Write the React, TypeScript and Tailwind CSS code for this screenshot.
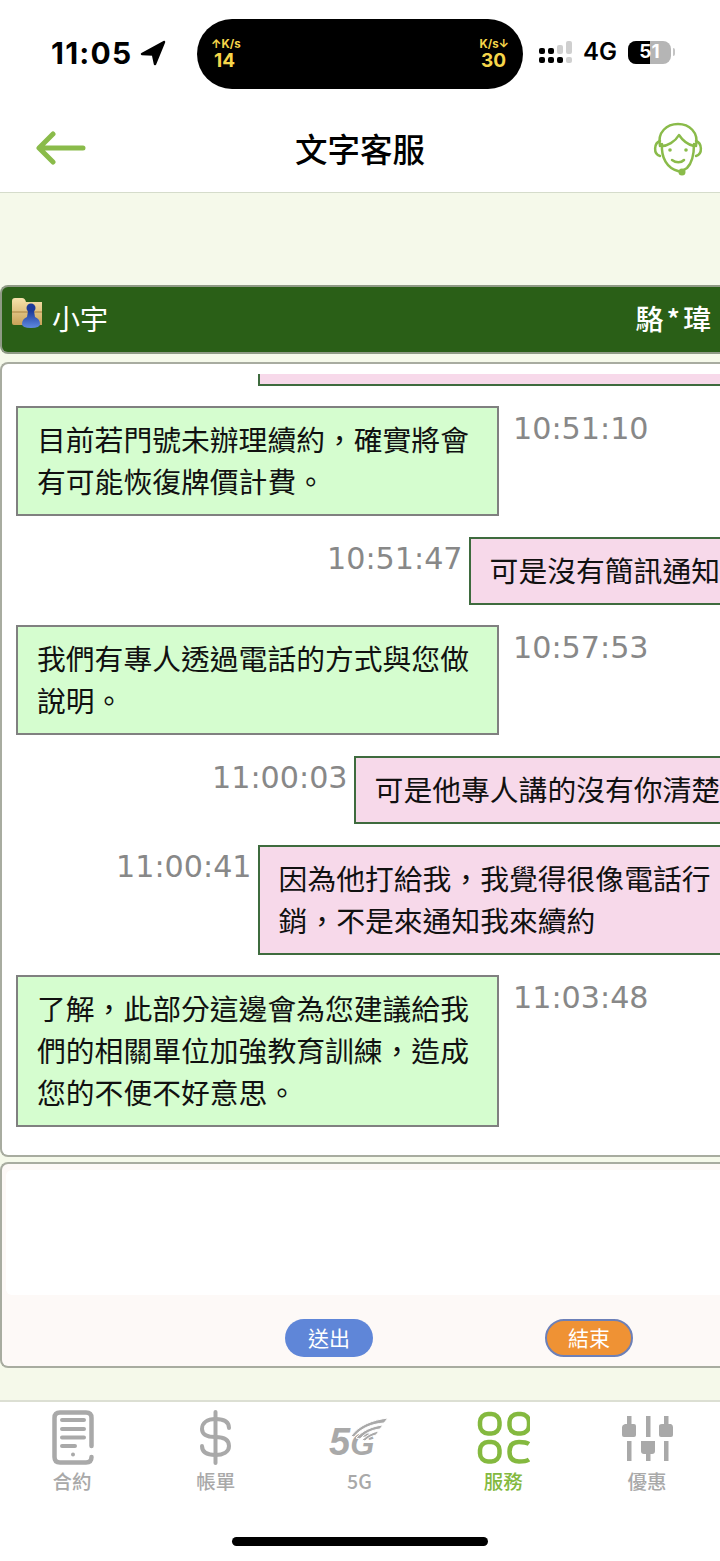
const cjk = "font-['Noto_Sans_CJK_TC',sans-serif]"

function StatusBar() {
  return (
    <div className="h-[108px] relative flex items-center">
      <div className="flex items-center ml-[51px] w-[146px] -mt-[2px]">
        <span className="font-['Inter',sans-serif] font-bold text-[30px] tracking-[1.2px] text-black">11:05</span>
        <svg className="ml-[8px]" width="26" height="26" viewBox="0 0 26 26"><path d="M24 2 L2 14 L13 14.5 L15 24 Z" fill="#000" stroke="#000" strokeLinejoin="round" strokeWidth="2.5" /></svg>
      </div>
      <div className="w-[326px] h-[70px] rounded-[35px] bg-black flex justify-between px-[14px] pt-[19px] text-[#f6d64a] font-['Inter',sans-serif] font-bold">
        <div className="flex flex-col">
          <span className="text-[11.5px] leading-[12px]">↑K/s</span>
          <span className="text-[19px] leading-[22px] ml-[3px]">14</span>
        </div>
        <div className="flex flex-col items-end">
          <span className="text-[11.5px] leading-[12px]">K/s↓</span>
          <span className="text-[19px] leading-[22px] mr-[3px]">30</span>
        </div>
      </div>
      <div className="flex items-center ml-[15px] -mt-[4px]">
        <svg width="35" height="24" viewBox="0 0 35 24">
          <rect x="1" y="8" width="6" height="6" rx="2" fill="#000" />
          <rect x="10" y="8" width="6" height="6" rx="2" fill="#000" />
          <rect x="1" y="17" width="6" height="6" rx="2" fill="#000" />
          <rect x="10" y="17" width="6" height="6" rx="2" fill="#000" />
          <rect x="19" y="17" width="6" height="6" rx="2" fill="#000" />
          <rect x="19" y="5" width="6" height="9" rx="2" fill="#cfcfcf" />
          <rect x="28" y="1" width="6" height="13" rx="2" fill="#cfcfcf" />
          <rect x="28" y="17" width="6" height="6" rx="2" fill="#cfcfcf" />
        </svg>
        <span className="ml-[10px] font-['Inter',sans-serif] font-semibold text-[24px] text-black">4G</span>
        <div className="ml-[11px] w-[43px] h-[23px] rounded-[8px] overflow-hidden flex relative bg-[#b5b5b5]">
          <div className="w-[22px] bg-black" />
          <span className="absolute inset-0 flex items-center justify-center font-['Inter',sans-serif] font-bold text-[19px] text-white">51</span>
        </div>
        <div className="w-[2px] h-[8px] bg-[#c4c4c4] rounded-r ml-[2px]" />
      </div>
    </div>
  )
}

function Header() {
  return (
    <header className="h-[85px] flex items-center bg-white border-b border-[#d5dccb] pb-[4px]">
      <div className="w-[200px]">
        <svg className="ml-[36px]" width="50" height="34" viewBox="0 0 50 34" fill="none" stroke="#8abb4a" strokeWidth="5" strokeLinecap="round" strokeLinejoin="round">
          <path d="M47 17 H4 M17 3 L3 17 L17 31" />
        </svg>
      </div>
      <h1 className={`${cjk} flex-1 text-center text-[32.5px] font-medium text-black`}>文字客服</h1>
      <div className="w-[200px] flex justify-end">
        <svg className="mr-[17px] mt-[3px]" width="50" height="56" viewBox="0 0 50 56" fill="none" stroke="#8abb4a" strokeWidth="2.5" strokeLinecap="round" strokeLinejoin="round">
          <path d="M7 24 C4 10 14 2 25 2 C36 2 46 10 43 24" />
          <path d="M9 24 C14 24 22 20 26 13 C30 19 36 23 41 24" />
          <path d="M9 22 C8 36 14 46 25 49 C28 50 31 48 34 46 C38 42 41 34 41 22" />
          <path d="M7 19 C1 21 0 32 7 34" />
          <path d="M43 19 C49 21 50 32 43 34" />
          <path d="M19 38 C23 41 28 41 31 38" />
          <circle cx="17" cy="28" r="1.8" fill="#8abb4a" stroke="none" />
          <circle cx="33" cy="28" r="1.8" fill="#8abb4a" stroke="none" />
          <circle cx="29" cy="50" r="3.5" fill="#8abb4a" stroke="none" />
        </svg>
      </div>
    </header>
  )
}

function AgentBadge() {
  return (
    <svg width="32" height="32" viewBox="0 0 32 32">
      <defs>
        <linearGradient id="folder" x1="0" y1="0" x2="0" y2="1">
          <stop offset="0" stopColor="#f6e2ac" />
          <stop offset="1" stopColor="#c9a258" />
        </linearGradient>
        <linearGradient id="person" x1="0" y1="0" x2="0" y2="1">
          <stop offset="0" stopColor="#1c3a9a" />
          <stop offset="1" stopColor="#5f8ae0" />
        </linearGradient>
      </defs>
      <path d="M1 4 Q1 1 4 1 H11 Q14 1 15 5 H31 V28 H3 Q1 28 1 26 Z" fill="url(#folder)" />
      <path d="M1 15 H31" stroke="#a8813f" strokeWidth="1" />
      <circle cx="20" cy="11" r="4.5" fill="#1c3a9a" />
      <path d="M17 14 H23 L24 20 Q29 22 29 27 Q29 31 20 31 Q11 31 11 27 Q11 22 16 20 Z" fill="url(#person)" />
    </svg>
  )
}

function AgentRow({ time, lines, mt }: { time: string; lines: React.ReactNode; mt: string }) {
  return (
    <div className={`flex ml-[14px] ${mt}`}>
      <div className={`w-[483px] shrink-0 bg-[#d5fdcf] border-2 border-[#808080] pl-[19px] pr-[10px] pt-[10px] pb-[12px] text-[28.8px] leading-[42px] text-[#111] ${cjk}`}>{lines}</div>
      <span className="ml-[14px] mt-[3px] font-['DejaVu_Sans',sans-serif] text-[30.2px] leading-[40px] text-[#888888]">{time}</span>
    </div>
  )
}

function UserRow({ time, lines, left, mt, wide }: { time: string; lines: React.ReactNode; left: string; mt: string; wide?: boolean }) {
  return (
    <div className={`flex ${left} ${mt}`}>
      <span className="mr-[6px] mt-[2px] shrink-0 font-['DejaVu_Sans',sans-serif] text-[30.2px] leading-[40px] text-[#888888]">{time}</span>
      <div className={`shrink-0 ${wide ? "w-[480px]" : ""} bg-[#f7d9ea] border-2 border-[#3e6b3e] pl-[19px] pr-[40px] pt-[10px] pb-[12px] text-[28.8px] leading-[42px] text-[#111] whitespace-nowrap ${cjk}`}>{lines}</div>
    </div>
  )
}

function Chat() {
  return (
    <div className="mt-[8px] h-[795px] bg-white border-2 border-r-0 border-[#a8aca0] rounded-l-[8px] overflow-hidden">
      <div className="ml-[256px] mt-[10px] h-[12px] bg-[#f7d9ea] border-l-2 border-b-2 border-[#3e6b3e]" />
      <AgentRow mt="mt-[20px]" time="10:51:10" lines={<>目前若門號未辦理續約，確實將會<br />有可能恢復牌價計費。</>} />
      <UserRow mt="mt-[21px]" left="ml-[325px]" time="10:51:47" lines="可是沒有簡訊通知" />
      <AgentRow mt="mt-[20px]" time="10:57:53" lines={<>我們有專人透過電話的方式與您做<br />說明。</>} />
      <UserRow mt="mt-[21px]" left="ml-[210px]" time="11:00:03" lines="可是他專人講的沒有你清楚" />
      <UserRow mt="mt-[21px]" left="ml-[114px]" wide time="11:00:41" lines={<>因為他打給我，我覺得很像電話行<br />銷，不是來通知我來續約</>} />
      <AgentRow mt="mt-[20px]" time="11:03:48" lines={<>了解，此部分這邊會為您建議給我<br />們的相關單位加強教育訓練，造成<br />您的不便不好意思。</>} />
    </div>
  )
}

function Composer() {
  return (
    <div className="mt-[5px] h-[206px] bg-[#fdf9f7] border-2 border-r-0 border-[#a8aca0] rounded-l-[8px] pt-[6px] pl-[4px]">
      <div className="h-[125px] bg-white rounded-l-[6px]" />
      <div className={`relative flex mt-[24px] text-white text-[21px] ${cjk}`}>
        <button className="ml-[279px] w-[88px] h-[38px] rounded-[19px] bg-[#5f86d8]">送出</button>
        <button className="ml-[172px] w-[88px] h-[38px] rounded-[19px] bg-[#ef9234] border-2 border-[#6c80b8]">結束</button>
      </div>
    </div>
  )
}

function NavIcon({ name }: { name: string }) {
  if (name === "contract") {
    return (
      <svg width="44" height="56" viewBox="0 0 44 56" fill="none" stroke="#a9a9a9" strokeLinecap="round">
        <path d="M41.5 36 V8 Q41.5 2.5 36 2.5 H10 Q4.5 2.5 4.5 8 V47 Q4.5 52.5 10 52.5 H36 Q41.5 52.5 41.5 47" strokeWidth="4.5" />
        <path d="M12 10 H34 M12 19 H34 M12 27.5 H34 M12 36 H25" strokeWidth="4" />
        <circle cx="23" cy="44.5" r="2" fill="#a9a9a9" stroke="none" />
      </svg>
    )
  }
  if (name === "bill") {
    return (
      <svg width="44" height="56" viewBox="0 0 44 56" fill="none" stroke="#a9a9a9" strokeWidth="4" strokeLinecap="round">
        <path d="M21.5 2 V53" />
        <path d="M35 18 C35 11 29 9 21.5 9 C13 9 8 13 8 19 C8 25 13 27 21.5 27 C30 27 35 30 35 36 C35 42 29 45 21.5 45 C14 45 8 43 8 36" />
      </svg>
    )
  }
  if (name === "5g") {
    return (
      <svg width="60" height="56" viewBox="0 0 60 56">
        <text x="0" y="45" fontFamily="Liberation Sans" fontWeight="700" fontStyle="italic" fontSize="38" fill="#a9a9a9">5<tspan fontSize="31">G</tspan></text>
        <g fill="#a9a9a9" stroke="#fff" strokeWidth="1">
          <path d="M22 26 C30 15 43 10 59 8 L55 13 C43 14 32 18 25 27 Z" />
          <path d="M27 28 C33 21 43 16 54 15 L51 19 C43 20 36 23 31 29 Z" />
          <path d="M33 30 C38 25 44 22 50 21 L47 25 C42 26 39 28 36 31 Z" />
        </g>
      </svg>
    )
  }
  if (name === "service") {
    return (
      <svg width="54" height="56" viewBox="0 0 54 56" fill="none" stroke="#84b93f" strokeWidth="4.5">
        <rect x="4" y="4" width="19.5" height="19.5" rx="8" />
        <rect x="33.5" y="4" width="19.5" height="19.5" rx="8" />
        <rect x="4" y="32" width="19.5" height="19.5" rx="8" />
        <path d="M53 34 Q50 32 43 32 Q33.5 32 33.5 41.7 Q33.5 51.5 43 51.5 Q50 51.5 53 49.5" />
      </svg>
    )
  }
  return (
    <svg width="54" height="56" viewBox="0 0 54 56" fill="#a9a9a9" stroke="none">
      <rect x="26" y="6" width="4.5" height="21" />
      <rect x="7" y="6" width="4.5" height="9" />
      <rect x="44" y="6" width="4.5" height="9" />
      <path d="M5 14 H14 Q16 14 16 16 V25 Q16 27 14 27 H4 Q2 27 2 25 V17 Q2 15 5 14 Z" />
      <path d="M42 14 H51 Q53 15 53 17 V25 Q53 27 51 27 H41 Q39 27 39 25 V16 Q39 14 42 14 Z" />
      <rect x="7" y="31" width="4.5" height="20" />
      <rect x="44" y="31" width="4.5" height="20" />
      <path d="M21 31 H35 V41 Q35 44 32 44 H24 Q21 44 21 41 Z" />
      <rect x="26" y="44" width="4.5" height="7" />
    </svg>
  )
}

function TabBar() {
  const items = [
    { key: "contract", label: "合約" },
    { key: "bill", label: "帳單" },
    { key: "5g", label: "5G" },
    { key: "service", label: "服務", active: true },
    { key: "deal", label: "優惠" },
  ]
  return (
    <nav className="h-[161px] bg-white border-t-2 border-[#dcdfd3] relative">
      <ul className="grid grid-cols-5 pt-[8px] pr-[1px]">
        {items.map((it) => (
          <li key={it.key} className="flex flex-col items-center">
            <div className="h-[56px] flex items-center justify-center"><NavIcon name={it.key} /></div>
            <span className={`mt-[2px] text-[19.5px] leading-[26px] font-medium ${cjk} ${it.active ? "text-[#84b93f]" : "text-[#a9a9a9]"}`}>{it.label}</span>
          </li>
        ))}
      </ul>
      <div className="mx-auto mt-[43px] w-[256px] h-[9px] rounded-full bg-black" />
    </nav>
  )
}

export default function App() {
  return (
    <div className="w-[720px] h-[1561px] overflow-hidden flex flex-col bg-white">
      <StatusBar />
      <Header />
      <main className="h-[1207px] bg-[#f5f9ea] pt-[92px]">
        <div className="h-[69px] bg-[#2a5f17] border-2 border-r-0 border-[#8f9a86] rounded-l-[8px] flex items-center text-white">
          <div className="ml-[9px] -mt-[14px]"><AgentBadge /></div>
          <span className={`ml-[9px] -mt-[4px] text-[28px] ${cjk}`}>小宇</span>
          <span className={`ml-auto mr-[6px] -mt-[4px] text-[28px] font-medium tracking-[3px] ${cjk}`}>駱*瑋</span>
        </div>
        <Chat />
        <Composer />
      </main>
      <TabBar />
    </div>
  )
}
